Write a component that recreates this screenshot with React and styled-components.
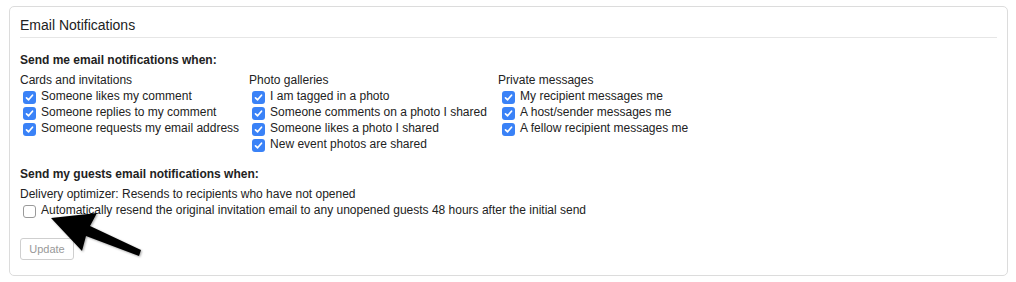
import React from 'react';
import styled, { createGlobalStyle } from 'styled-components';

const GlobalStyle = createGlobalStyle`
  html, body {
    margin: 0;
    padding: 0;
    background: #fff;
  }
  body {
    font-family: 'Liberation Sans', Arial, Helvetica, sans-serif;
    color: #222;
  }
`;

const Page = styled.div`
  position: relative;
  padding: 6px 8px 0 9px;
`;

const Panel = styled.section`
  border: 1px solid #dcdcdc;
  border-radius: 5px;
  padding: 8px 10px 15px 10px;
`;

const Title = styled.h2`
  margin: 0;
  font-size: 14px;
  font-weight: normal;
  line-height: 20px;
  padding-bottom: 2px;
  border-bottom: 1px solid #e6e6e6;
`;

const Heading = styled.h3`
  margin: 14px 0 ${(p) => p.$after || 4}px;
  font-size: 12px;
  font-weight: bold;
  line-height: 16px;
`;

const Columns = styled.div`
  display: flex;
  gap: 10px;
  align-items: flex-start;
`;

const Column = styled.div`
  display: flex;
  flex-direction: column;
  font-size: 12px;
  line-height: 16px;
  min-width: ${(p) => p.$min || 0}px;
`;

const Caption = styled.div`
  font-size: 12px;
  line-height: 16px;
`;

const Row = styled.label`
  display: flex;
  align-items: center;
  gap: 5px;
  padding-left: ${(p) => p.$indent || 3}px;
  font-size: 12px;
  line-height: 16px;
  white-space: nowrap;
`;

const Box = styled.span`
  flex: none;
  width: 13px;
  height: 13px;
  box-sizing: border-box;
  border-radius: 3px;
  margin-top: 2px;
  display: flex;
  align-items: center;
  justify-content: center;
  background: ${(p) => (p.$checked ? '#3a82f7' : '#fff')};
  border: ${(p) => (p.$checked ? 'none' : '1px solid #9a9a9a')};
`;

const Button = styled.button`
  margin-top: 20px;
  width: 54px;
  height: 22px;
  padding: 0;
  font-family: inherit;
  font-size: 11px;
  color: #999;
  background: #fff;
  border: 1px solid #cfcfcf;
  border-radius: 3px;
`;

const Arrow = styled.svg`
  position: absolute;
  left: 0;
  top: 0;
  pointer-events: none;
  filter: drop-shadow(1px 1px 1px rgba(0, 0, 0, 0.35));
`;

const Check = ({ checked, children, indent }) => (
  <Row $indent={indent}>
    <Box $checked={checked}>
      {checked && (
        <svg width="9" height="9" viewBox="0 0 9 9">
          <path d="M1.5 4.8 L3.6 6.8 L7.5 2.2" fill="none" stroke="#fff" strokeWidth="1.7" strokeLinecap="round" strokeLinejoin="round" />
        </svg>
      )}
    </Box>
    {children}
  </Row>
);

const groups = [
  {
    title: 'Cards and invitations',
    min: 219,
    indent: 3,
    items: ['Someone likes my comment', 'Someone replies to my comment', 'Someone requests my email address'],
  },
  {
    title: 'Photo galleries',
    min: 239,
    indent: 3,
    items: ['I am tagged in a photo', 'Someone comments on a photo I shared', 'Someone likes a photo I shared', 'New event photos are shared'],
  },
  {
    title: 'Private messages',
    min: 200,
    indent: 4,
    items: ['My recipient messages me', 'A host/sender messages me', 'A fellow recipient messages me'],
  },
];

export default function App() {
  return (
    <>
      <GlobalStyle />
      <Page>
        <Panel>
          <Title>Email Notifications</Title>
          <Heading>Send me email notifications when:</Heading>
          <Columns>
            {groups.map((g) => (
              <Column key={g.title} $min={g.min}>
                <Caption>{g.title}</Caption>
                {g.items.map((it) => (
                  <Check key={it} checked indent={g.indent}>{it}</Check>
                ))}
              </Column>
            ))}
          </Columns>
          <Heading $after={4}>Send my guests email notifications when:</Heading>
          <Caption>Delivery optimizer: Resends to recipients who have not opened</Caption>
          <Check>Automatically resend the original invitation email to any unopened guests 48 hours after the initial send</Check>
          <Button type="button">Update</Button>
        </Panel>
        <Arrow width="1016" height="282" viewBox="0 0 1016 282">
          <polygon points="51,218 97,213 90,226 141,250 139,256 86,236 82,251" fill="#000" />
        </Arrow>
      </Page>
    </>
  );
}
